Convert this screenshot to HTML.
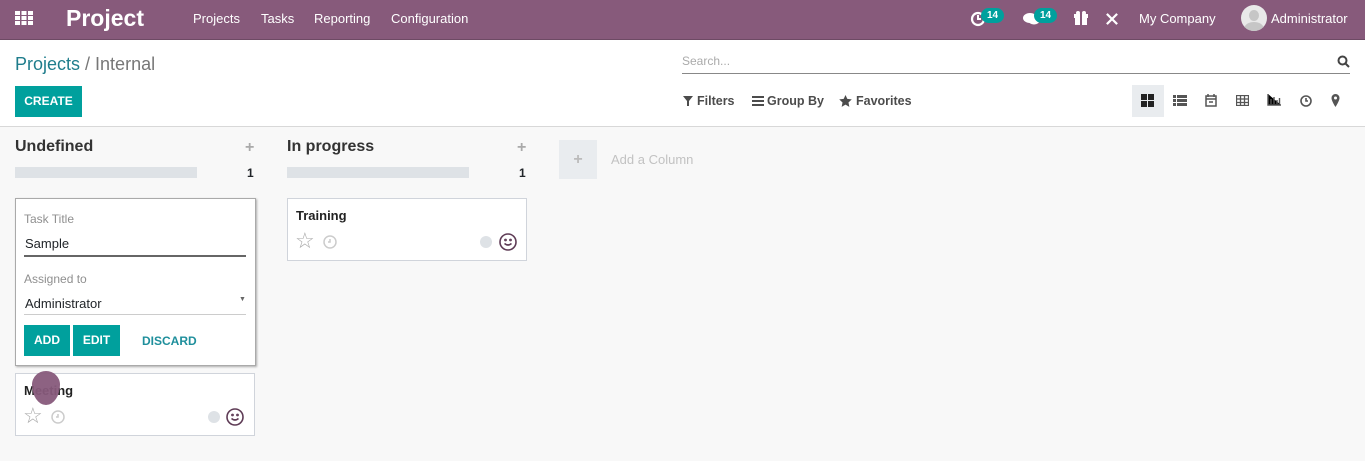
<!DOCTYPE html>
<html><head><meta charset="utf-8"><style>
*{box-sizing:border-box;margin:0;padding:0}
body{width:1365px;height:461px;overflow:hidden;font-family:"Liberation Sans",sans-serif;font-size:13px;color:#212529;background:#f8f8f8;position:relative}
.a{position:absolute}
.nav{left:0;top:0;width:1365px;height:40px;background:#875a7b;border-bottom:1px solid #6d4a64;color:#fff}
.nav .t{font-size:13px;top:11px}
.cp{left:0;top:40px;width:1365px;height:87px;background:#fff;border-bottom:1px solid #d8d8d8}
.badge{background:#00a09d;color:#fff;font-size:10px;font-weight:bold;border-radius:9px;padding:2px 6px}
.btn{background:#00a09d;color:#fff;font-weight:bold;font-size:12px;text-align:center}
.card{background:#fff;border:1px solid #d0d4db}
.bar{height:11px;background:#dee2e6}
.lbl{color:#8f8f8f;font-size:12px}
.star{font-size:22px;color:#aaa;line-height:1}
</style></head><body>
<div class="a nav">
 <svg class="a" style="left:15px;top:11px" width="18" height="14" viewBox="0 0 18 14" fill="#fff"><rect x="0" y="0" width="5" height="4"/><rect x="6.5" y="0" width="5" height="4"/><rect x="13" y="0" width="5" height="4"/><rect x="0" y="5" width="5" height="4"/><rect x="6.5" y="5" width="5" height="4"/><rect x="13" y="5" width="5" height="4"/><rect x="0" y="10" width="5" height="4"/><rect x="6.5" y="10" width="5" height="4"/><rect x="13" y="10" width="5" height="4"/></svg>
 <div class="a" style="left:66px;top:5px;font-size:23px;font-weight:bold">Project</div>
 <div class="a t" style="left:193px">Projects</div>
 <div class="a t" style="left:261px">Tasks</div>
 <div class="a t" style="left:314px">Reporting</div>
 <div class="a t" style="left:391px">Configuration</div>
 <svg class="a" style="left:970px;top:11px" width="16" height="16" viewBox="0 0 16 16"><circle cx="8" cy="8" r="6" fill="none" stroke="#fff" stroke-width="2.2"/><path d="M8 4v4h3" stroke="#fff" stroke-width="2" fill="none"/></svg>
 <span class="a badge" style="left:981px;top:8px">14</span>
 <svg class="a" style="left:1023px;top:12px" width="18" height="14" viewBox="0 0 18 14" fill="#fff"><ellipse cx="7" cy="6" rx="7" ry="5"/><ellipse cx="11" cy="8" rx="6" ry="4.5"/></svg>
 <span class="a badge" style="left:1034px;top:8px">14</span>
 <svg class="a" style="left:1074px;top:11px" width="14" height="14" viewBox="0 0 14 14" fill="#fff"><rect x="0" y="3" width="14" height="4"/><rect x="1" y="7" width="12" height="7"/><rect x="6" y="3" width="2" height="11" fill="#875a7b"/><circle cx="4" cy="2" r="2"/><circle cx="10" cy="2" r="2"/></svg>
 <svg class="a" style="left:1105px;top:12px" width="14" height="14" viewBox="0 0 15 15" stroke="#fff" stroke-width="2.4"><path d="M2 2l11 11M13 2L2 13"/></svg>
 <div class="a t" style="left:1139px">My Company</div>
 <div class="a" style="left:1241px;top:5px;width:26px;height:26px;border-radius:50%;background:#e9e9e9;overflow:hidden"><div class="a" style="left:8px;top:5px;width:10px;height:11px;border-radius:50%;background:#c6c6c6"></div><div class="a" style="left:3px;top:17px;width:20px;height:14px;border-radius:50%;background:#c6c6c6"></div></div>
 <div class="a t" style="left:1271px">Administrator</div>
</div>
<div class="a cp">
 <div class="a" style="left:15px;top:14px;font-size:18px"><span style="color:#1f7d8c">Projects</span> <span style="color:#777">/ Internal</span></div>
 <div class="a btn" style="left:15px;top:46px;width:67px;height:31px;line-height:31px">CREATE</div>
 <div class="a" style="left:682px;top:14px;color:#aaa;font-size:12px">Search...</div>
 <div class="a" style="left:682px;top:33px;width:668px;height:1px;background:#888"></div>
 <svg class="a" style="left:1337px;top:15px" width="13" height="13" viewBox="0 0 13 13" stroke="#444" stroke-width="2" fill="none"><circle cx="5.5" cy="5.5" r="4"/><path d="M8.5 8.5l3.5 3.5"/></svg>
 <svg class="a" style="left:683px;top:56px" width="10" height="10" fill="#4c4c4c"><path d="M0 0h10L6 5v5H4V5z"/></svg>
 <div class="a" style="left:697px;top:54px;font-weight:bold;color:#4c4c4c;font-size:12.5px">Filters</div>
 <svg class="a" style="left:752px;top:56px" width="12" height="10" fill="#4c4c4c"><rect width="12" height="2"/><rect y="4" width="12" height="2"/><rect y="8" width="12" height="2"/></svg>
 <div class="a" style="left:767px;top:54px;font-weight:bold;color:#4c4c4c;font-size:12.5px">Group By</div>
 <svg class="a" style="left:839px;top:55px" width="13" height="12" viewBox="0 0 24 23" fill="#4c4c4c"><path d="M12 0l3.5 7.5 8.5 1-6.3 5.8 1.7 8.4L12 18.5 4.6 22.7l1.7-8.4L0 8.5l8.5-1z"/></svg>
 <div class="a" style="left:856px;top:54px;font-weight:bold;color:#4c4c4c;font-size:12.5px">Favorites</div>
 <div class="a" style="left:1132px;top:45px;width:32px;height:32px;background:#e9ecef"></div>
 <svg class="a" style="left:1141px;top:54px" width="13" height="13" fill="#222"><rect width="6" height="6"/><rect x="7" width="6" height="6"/><rect y="7" width="6" height="6"/><rect x="7" y="7" width="6" height="6"/></svg>
 <svg class="a" style="left:1173px;top:55px" width="14" height="11" fill="#555"><rect width="3" height="3"/><rect x="4" width="10" height="3"/><rect y="4" width="3" height="3"/><rect x="4" y="4" width="10" height="3"/><rect y="8" width="3" height="3"/><rect x="4" y="8" width="10" height="3"/></svg>
 <svg class="a" style="left:1205px;top:53px" width="12" height="14" fill="none" stroke="#555" stroke-width="1.5"><rect x="1" y="3" width="10" height="10"/><path d="M1 6h10M3 1v3M9 1v3M4 9h4"/></svg>
 <svg class="a" style="left:1236px;top:55px" width="13" height="11" fill="none" stroke="#555" stroke-width="1.3"><rect x=".5" y=".5" width="12" height="10"/><path d="M.5 4h12M.5 7.5h12M4.5 .5v10M8.5 .5v10"/></svg>
 <svg class="a" style="left:1267px;top:54px" width="14" height="12" stroke="#555" stroke-width="1.4"><path d="M1 0v11h13M4 10V5M7 10V3M10 10V6M12.5 10V4"/></svg>
 <svg class="a" style="left:1300px;top:55px" width="12" height="12" fill="none" stroke="#555" stroke-width="1.6"><circle cx="6" cy="6" r="5"/><path d="M6 3v3h2"/></svg>
 <svg class="a" style="left:1331px;top:54px" width="9" height="13" fill="#555"><path d="M4.5 0a4 4 0 014 4c0 3-4 9-4 9S.5 7 .5 4a4 4 0 014-4z"/><circle cx="4.5" cy="4" r="1.5" fill="#fff"/></svg>
</div>
<div class="a" style="left:15px;top:138px;font-size:16px;font-weight:bold;color:#333">Undefined</div>
<div class="a" style="left:245px;top:139px;color:#aaa;font-size:16px;font-weight:bold">+</div>
<div class="a bar" style="left:15px;top:167px;width:182px"></div>
<div class="a" style="left:247px;top:166px;font-weight:bold;font-size:12px">1</div>
<div class="a" style="left:287px;top:138px;font-size:16px;font-weight:bold;color:#333">In progress</div>
<div class="a" style="left:517px;top:139px;color:#aaa;font-size:16px;font-weight:bold">+</div>
<div class="a bar" style="left:287px;top:167px;width:182px"></div>
<div class="a" style="left:519px;top:166px;font-weight:bold;font-size:12px">1</div>
<div class="a" style="left:559px;top:140px;width:38px;height:39px;background:#e9ecef;color:#bbb;text-align:center;line-height:39px;font-size:16px;font-weight:bold">+</div>
<div class="a" style="left:611px;top:152px;color:#c2c2c2;font-size:13px">Add a Column</div>

<div class="a card" style="left:15px;top:198px;width:241px;height:168px;border-color:#aaa;box-shadow:1px 1px 2px rgba(0,0,0,.3)">
 <div class="a lbl" style="left:8px;top:13px">Task Title</div>
 <div class="a" style="left:9px;top:37px;font-size:13px">Sample</div>
 <div class="a" style="left:8px;top:56px;width:222px;height:2px;background:#666"></div>
 <div class="a lbl" style="left:8px;top:73px">Assigned to</div>
 <div class="a" style="left:9px;top:97px;font-size:13px">Administrator</div>
 <div class="a" style="left:223px;top:97px;font-size:7px;color:#666">▼</div>
 <div class="a" style="left:8px;top:115px;width:222px;height:1px;background:#ccc"></div>
 <div class="a btn" style="left:8px;top:126px;width:46px;height:31px;line-height:31px">ADD</div>
 <div class="a btn" style="left:57px;top:126px;width:47px;height:31px;line-height:31px">EDIT</div>
 <div class="a" style="left:126px;top:135px;color:#1f8f9c;font-weight:bold;font-size:12px">DISCARD</div>
</div>
<div class="a card" style="left:15px;top:373px;width:240px;height:63px">
 <div class="a" style="left:8px;top:9px;font-size:13px;font-weight:bold;color:#222">Meeting</div>
 <div class="a" style="left:16px;top:-3px;width:28px;height:34px;background:#875a7b;border-radius:50% 50% 50% 50%/40% 40% 60% 60%;opacity:.95"></div>
 <div class="a star" style="left:7px;top:31px">☆</div>
 <svg class="a" style="left:35px;top:36px" width="14" height="14" fill="none" stroke="#ccc" stroke-width="1.5"><circle cx="7" cy="7" r="6"/><path d="M7 4v3H5"/></svg>
 <div class="a" style="left:192px;top:37px;width:12px;height:12px;border-radius:50%;background:#dee2e6"></div>
 <svg class="a" style="left:210px;top:34px" width="18" height="18" fill="none" stroke="#5e3b55" stroke-width="1.6"><circle cx="9" cy="9" r="8"/><path d="M5.5 10.5q3.5 3 7 0"/><circle cx="6.5" cy="7" r=".6"/><circle cx="11.5" cy="7" r=".6"/></svg>
</div>
<div class="a card" style="left:287px;top:198px;width:240px;height:63px">
 <div class="a" style="left:8px;top:9px;font-size:13px;font-weight:bold;color:#222">Training</div>
 <div class="a star" style="left:7px;top:31px">☆</div>
 <svg class="a" style="left:35px;top:36px" width="14" height="14" fill="none" stroke="#ccc" stroke-width="1.5"><circle cx="7" cy="7" r="6"/><path d="M7 4v3H5"/></svg>
 <div class="a" style="left:192px;top:37px;width:12px;height:12px;border-radius:50%;background:#dee2e6"></div>
 <svg class="a" style="left:211px;top:34px" width="18" height="18" fill="none" stroke="#5e3b55" stroke-width="1.6"><circle cx="9" cy="9" r="8"/><path d="M5.5 10.5q3.5 3 7 0"/><circle cx="6.5" cy="7" r=".6"/><circle cx="11.5" cy="7" r=".6"/></svg>
</div>
</body></html>
